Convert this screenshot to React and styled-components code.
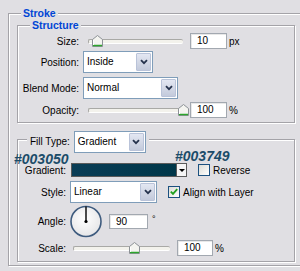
import React from 'react';
import styled, { createGlobalStyle } from 'styled-components';

const GlobalStyle = createGlobalStyle`
  html, body { margin:0; padding:0; background:#e0dfe3; }
  body {
    width:300px; height:271px; overflow:hidden;
    font-family:"Liberation Sans", Arial, sans-serif;
    font-size:10px; color:#000;
  }
`;

const BG = '#e0dfe3';

const Page = styled.div`
  width:300px;
  height:271px;
  overflow:hidden;
  box-sizing:border-box;
  padding:7px 0 0 8px;
`;

const Group = styled.fieldset`
  position:relative;
  box-sizing:border-box;
  margin:${(p) => p.$mt || 0}px 0 0 0;
  padding:${(p) => p.$pad};
  width:${(p) => p.$w}px;
  min-width:0;
  border:1px solid #a4a3a8;
  box-shadow:1px 1px 0 #fff, inset 1px 1px 0 #fff;
`;

const Legend = styled.legend`
  margin-left:${(p) => p.$ml}px;
  padding:0 ${(p) => p.$px || 2}px;
  background:${BG};
  line-height:12px;
  font-size:10.5px;
  font-weight:bold;
  color:#0046d5;
`;

const LegendRow = styled.span`
  display:flex;
  align-items:flex-start;
  height:16px;
  font-weight:normal;
  font-size:10px;
  color:#000;
  line-height:22px;
  gap:4px;
`;

const Row = styled.div`
  display:flex;
  align-items:center;
  height:${(p) => p.$h}px;
  margin-top:${(p) => p.$mt || 0}px;
  line-height:11px;
`;

const Label = styled.span`
  width:${(p) => p.$w}px;
  flex:none;
  text-align:right;
  white-space:nowrap;
`;

const Gap = styled.span`
  margin-left:${(p) => p.$ml}px;
  display:flex;
  align-items:center;
  flex:none;
`;

const SelectBox = styled.div`
  box-sizing:border-box;
  width:${(p) => p.$w}px;
  height:22px;
  display:flex;
  background:#fff;
  border:1px solid #7f9db9;
  flex:none;
`;

const SelectText = styled.span`
  flex:1;
  padding-left:3px;
  line-height:20px;
  white-space:nowrap;
  overflow:hidden;
`;

const ArrowBtn = styled.span`
  box-sizing:border-box;
  width:15px;
  margin:1px;
  display:flex;
  align-items:center;
  justify-content:center;
  background:linear-gradient(#e3e7f2, #c3cadb);
  border:1px solid #b9c3d9;
  border-radius:1px;
`;

const Chevron = () => (
  <svg width="8" height="6" viewBox="0 0 8 6">
    <path d="M1 1.2 L4 4.2 L7 1.2" fill="none" stroke="#26334d" strokeWidth="1.8" />
  </svg>
);

const Select = ({ w, children }) => (
  <SelectBox $w={w}>
    <SelectText>{children}</SelectText>
    <ArrowBtn><Chevron /></ArrowBtn>
  </SelectBox>
);

const Field = styled.span`
  box-sizing:border-box;
  width:${(p) => p.$w}px;
  height:${(p) => p.$h || 16}px;
  background:#fff;
  border:1px solid #a2a8b0;
  box-shadow:inset 1px 1px 0 #e8e8e8;
  padding-left:6px;
  line-height:${(p) => (p.$h || 16) - 2}px;
  flex:none;
`;

const Unit = styled.span`
  margin-left:${(p) => p.$ml || 2}px;
`;

const SliderWrap = styled.span`
  position:relative;
  width:${(p) => p.$w}px;
  height:12px;
  flex:none;
  &::before {
    content:'';
    position:absolute;
    left:0; right:0; top:4px;
    height:3px;
    background:#f3f2ec;
    border-top:1px solid #a9a9a6;
    border-left:1px solid #a9a9a6;
    border-bottom:1px solid #fff;
    border-radius:2px;
  }
`;

const ThumbSvg = styled.svg`
  position:absolute;
  top:0;
`;

const Slider = ({ w, value }) => (
  <SliderWrap $w={w}>
    <ThumbSvg width="11" height="12" viewBox="0 0 11 12" style={{ left: value * w - 5.5 }}>
      <path d="M0.5 4.5 L5.5 0.5 L10.5 4.5 L10.5 11.5 L0.5 11.5 Z" fill="#f4f4f0" stroke="#8c9196" />
      <path d="M1 10.5 H10" stroke="#2da52d" strokeWidth="1.5" />
      <path d="M1.5 5 L1.5 10" stroke="#fff" />
    </ThumbSvg>
  </SliderWrap>
);

const GradBox = styled.span`
  box-sizing:border-box;
  display:flex;
  width:116px;
  height:14px;
  border:1px solid #5a5a5a;
  flex:none;
`;

const GradBar = styled.span`
  flex:1;
  background:linear-gradient(90deg, ${(p) => p.$from}, ${(p) => p.$to});
`;

const GradArrow = styled.span`
  width:9px;
  background:#f5f5f5;
  border-left:1px solid #5a5a5a;
  display:flex;
  align-items:center;
  justify-content:center;
  &::after {
    content:'';
    border-left:3px solid transparent;
    border-right:3px solid transparent;
    border-top:3px solid #000;
  }
`;

const Box = styled.span`
  box-sizing:border-box;
  width:12px;
  height:12px;
  border:1px solid #1c5180;
  background:linear-gradient(135deg, #dcdcd6, #fff);
  display:flex;
  align-items:center;
  justify-content:center;
  flex:none;
`;

const Check = ({ checked }) => (
  <Box>
    {checked && (
      <svg width="8" height="8" viewBox="0 0 8 8">
        <path d="M0.8 3.6 L3 5.9 L7.2 1.2" fill="none" stroke="#21a121" strokeWidth="1.8" />
      </svg>
    )}
  </Box>
);

const Dial = () => (
  <svg width="32" height="33" viewBox="0 0 32 33">
    <defs>
      <radialGradient id="dialFill" cx="0.45" cy="0.4" r="0.7">
        <stop offset="0" stopColor="#ffffff" />
        <stop offset="1" stopColor="#e2e2e4" />
      </radialGradient>
    </defs>
    <circle cx="16" cy="16.5" r="15" fill="url(#dialFill)" stroke="#3e5b7e" strokeWidth="1.6" />
    <line x1="16" y1="16.5" x2="16" y2="1.5" stroke="#000" strokeWidth="1.4" />
    <circle cx="16" cy="16.5" r="1.6" fill="#000" />
  </svg>
);

const Hex = styled.span`
  position:absolute;
  left:${(p) => p.$x}px;
  top:${(p) => p.$y}px;
  font-family:"Liberation Sans", Arial, sans-serif;
  font-size:14px;
  font-weight:bold;
  font-style:italic;
  color:#1b4c69;
  line-height:11px;
`;

const Deg = styled.span`
  margin-left:4px;
  margin-top:-4px;
  font-size:9px;
  color:#000;
`;

export default function App() {
  return (
    <Page>
      <GlobalStyle />
      <Group $w={320} $pad="0 0 3px 8px">
        <Legend $ml={4}>Stroke</Legend>

        <Group $w={278} $pad="0 0 3px 0">
          <Legend $ml={12}>Structure</Legend>
          <Row $h={20}>
            <Label $w={61}>Size:</Label>
            <Gap $ml={9}><Slider w={95} value={0.1} /></Gap>
            <Gap $ml={7}><Field $w={37}>10</Field></Gap>
            <Unit>px</Unit>
          </Row>
          <Row $h={22}>
            <Label $w={61}>Position:</Label>
            <Gap $ml={4}><Select w={70}>Inside</Select></Gap>
          </Row>
          <Row $h={22} $mt={4}>
            <Label $w={61}>Blend Mode:</Label>
            <Gap $ml={4}><Select w={95}>Normal</Select></Gap>
          </Row>
          <Row $h={18} $mt={2}>
            <Label $w={61}>Opacity:</Label>
            <Gap $ml={9}><Slider w={95} value={1} /></Gap>
            <Gap $ml={7}><Field $w={37}>100</Field></Gap>
            <Unit>%</Unit>
          </Row>
        </Group>

        <Group $w={278} $mt={8} $pad="0 0 5px 0">
          <Legend $ml={9} $px={3}>
            <LegendRow>
              Fill Type:
              <Select w={72}>Gradient</Select>
            </LegendRow>
          </Legend>
          <Hex $x={-4} $y={7}>#003050</Hex>
          <Hex $x={157} $y={4}>#003749</Hex>
          <Row $h={18} $mt={14}>
            <Label $w={48}>Gradient:</Label>
            <Gap $ml={5}>
              <GradBox>
                <GradBar $from="#0a3d56" $to="#003749" />
                <GradArrow />
              </GradBox>
            </Gap>
            <Gap $ml={11}><Check /></Gap>
            <Unit $ml={3}>Reverse</Unit>
          </Row>
          <Row $h={22} $mt={2}>
            <Label $w={48}>Style:</Label>
            <Gap $ml={4}><Select w={87}>Linear</Select></Gap>
            <Gap $ml={11}><Check checked /></Gap>
            <Unit $ml={3}>Align with Layer</Unit>
          </Row>
          <Row $h={33} $mt={2}>
            <Label $w={48}>Angle:</Label>
            <Gap $ml={4}><Dial /></Gap>
            <Gap $ml={7}><Field $w={39} $h={15}>90</Field></Gap>
            <Deg>°</Deg>
          </Row>
          <Row $h={16} $mt={2}>
            <Label $w={48}>Scale:</Label>
            <Gap $ml={7}><Slider w={97} value={0.63} /></Gap>
            <Gap $ml={7}><Field $w={36}>100</Field></Gap>
            <Unit>%</Unit>
          </Row>
        </Group>
      </Group>
    </Page>
  );
}
